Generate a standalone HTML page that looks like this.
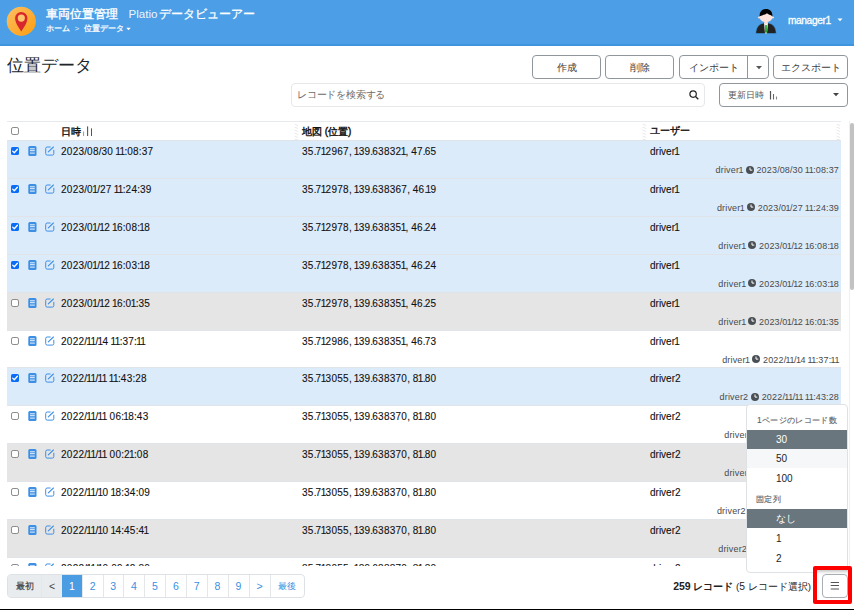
<!DOCTYPE html>
<html lang="ja"><head><meta charset="utf-8">
<style>
*{box-sizing:border-box;margin:0;padding:0}
html,body{width:854px;height:610px;overflow:hidden;background:#fff;font-family:"Liberation Sans",sans-serif;color:#212529}
.abs{position:absolute}
#hdr{position:absolute;left:0;top:0;width:854px;height:46px;background:#4c9fe6;border-bottom:2px solid #3e94dd}
#logo{left:5px;top:5px}
.t1{left:46px;top:7px;color:#fff;font-size:12px;font-weight:normal;white-space:nowrap;line-height:14px}
.t2{font-weight:normal;margin-left:10.5px}
.bc{left:46px;top:24px;color:#fff;font-size:8px;white-space:nowrap;line-height:10px;-webkit-text-stroke:.25px #fff}
#ptitle{left:7px;top:55px;font-size:16.6px;color:#212529;line-height:22px}
.btn{position:absolute;top:55px;height:24px;border:1px solid #8f969c;border-radius:4px;font-size:9.5px;color:#3d3d3d;text-align:center;line-height:23.5px;background:#fff;white-space:nowrap}
#search{left:291px;top:83px;width:414px;height:24px;border:1px solid #e6e8ea;border-radius:4px;font-size:9.6px;letter-spacing:-.2px;color:#6b6b6b;line-height:22px;padding-left:5px}
#sort{left:719px;top:83px;width:129px;height:24px;border:1px solid #8f969c;border-radius:4px;font-size:9.4px;color:#555;line-height:22px;padding-left:8px}
#tbl{left:7px;top:121px;width:834px;height:445px;overflow:hidden;border-top:1px solid #e6eaee}
.hd{position:absolute;top:0;left:0;width:834px;height:19px;font-size:10px;font-weight:normal;-webkit-text-stroke:.4px #111;color:#111;background:#fff}
.row{position:absolute;left:0;width:834px;height:38px;border-top:1px solid #e0e4e8;font-size:10px;color:#111;white-space:nowrap;-webkit-text-stroke:.1px #111}
.sel{background:#dcebfa}
.gr{background:#e5e5e5}
.wh{background:#fff}
.cbx{position:absolute;left:4px;top:6px}
.doc{position:absolute;left:21px;top:5px}
.edit{position:absolute;left:38px;top:5px}
.c1{position:absolute;left:54px;top:5px;line-height:12px}
.c2{position:absolute;left:295px;top:5px;line-height:12px}
.c3{position:absolute;left:643px;top:5px;line-height:12px}
.c4{position:absolute;right:2px;top:23px;font-size:9px;color:#4a4a4a;line-height:12px;-webkit-text-stroke:0}
.num{letter-spacing:.26px}
i{font-style:normal}
.o{letter-spacing:-.6px;margin-left:-.74px}
.p{letter-spacing:-.9px}
.z{letter-spacing:0}
.cm{letter-spacing:0}
.c4{letter-spacing:.18px}
.c4 .o{letter-spacing:-.5px;margin-left:-.65px}
.c4 .p{letter-spacing:-.9px}
.c4 .z{letter-spacing:0}
.cm{letter-spacing:0}
#sbline{left:849px;top:121px;width:1px;height:445px;background:#f0f0f0}
#thumb{left:850px;top:123px;width:4px;height:167px;background:#c2c2c2;border-radius:2px}
#pag{left:7px;top:574px;height:24px;width:298px;border:1px solid #dee2e6;border-radius:4px;overflow:hidden;font-size:10.5px}
.pg{position:absolute;top:0;height:22px;line-height:22px;text-align:center;color:#3a8fe0;border-left:1px solid #e4e7ea}
#foot{right:43px;top:580px;font-size:9.7px;color:#222;white-space:nowrap;line-height:12px}
#menu{left:746px;top:404px;width:102px;height:169px;border:1px solid #dfe2e5;border-radius:4px;background:#fff;font-size:10px}
.mh{position:absolute;left:9px;font-size:8.4px;letter-spacing:.35px;color:#5f656b;-webkit-text-stroke:.15px #5f656b;line-height:10px;white-space:nowrap}
.mi{position:absolute;left:0;width:100px;height:19px;line-height:19px;padding-left:29px;color:#212529}
.mact{background:#6a767d;color:#fff}
.mlt{background:#f6f7f8}
#redbox{left:813px;top:566px;width:39px;height:38px;border:4px solid #f00;border-radius:2px;background:linear-gradient(#c9c9c9 0,#dedede 1.5px,#f4f4f4 3px,#fff 5px)}
#mbtn{left:822px;top:574px;width:26px;height:24px;border:1px solid #a9aeb3;border-radius:4px;background:#fff}
#botline{left:0;top:609px;width:854px;height:1px;background:#000}
</style></head><body>
<div id="hdr"></div>
<svg id="logo" class="abs" width="32" height="32" viewBox="0 0 32 32">
<defs><linearGradient id="og" x1="0" y1="0" x2="1" y2="1"><stop offset="0" stop-color="#fdc064"/><stop offset="1" stop-color="#fd9c0e"/></linearGradient></defs>
<circle cx="16.3" cy="16.3" r="15.3" fill="#3aa4f6"/>
<circle cx="16.3" cy="16.3" r="14.6" fill="url(#og)"/>
<path d="M16.3 26.4 C13.5 22.3 10.1 18 10.1 13.1 A6.15 6.15 0 0 1 22.4 13.1 C22.4 18 19.1 22.3 16.3 26.4Z" fill="#d8262d"/>
<circle cx="16.3" cy="13.1" r="3.6" fill="#fcc46c"/>
</svg>
<div class="abs t1"><span style="-webkit-text-stroke:.35px #fff">車両位置管理</span><span class="t2"><span style="font-size:11.6px;color:rgba(255,255,255,.9)">Platio</span><span style="-webkit-text-stroke:.3px #fff;margin-left:1.8px">データビューアー</span></span></div>
<div class="abs bc">ホーム &nbsp;<span style="-webkit-text-stroke:0;opacity:.85">&gt;</span>&nbsp; 位置データ</div>
<svg class="abs" style="left:126px;top:27px" width="5" height="4" viewBox="0 0 5 4"><path d="M0.3 0.8H4.7L2.5 3.2Z" fill="#fff"/></svg>
<svg class="abs" style="left:752px;top:6px" width="28" height="30" viewBox="0 0 28 30">
<path d="M3.8 27.6 C3.8 20.5 8 16.8 14 16.8 C20 16.8 24.2 20.5 24.2 27.6Z" fill="#222" stroke="#3aa0f0" stroke-width="0.6"/>
<path d="M12 16.8 L16 16.8 L15 27.5 L13 27.5Z" fill="#f4f4f4"/>
<path d="M13.2 19 L14.8 19 L15 26 L14 27.4 L13 26Z" fill="#22a52a"/>
<rect x="12.3" y="14" width="3.4" height="4" fill="#fde0d8"/>
<ellipse cx="14" cy="11.5" rx="6.3" ry="4.6" fill="#fde3db"/>
<ellipse cx="7.2" cy="11.5" rx="1.2" ry="1.1" fill="#fde3db"/>
<ellipse cx="20.8" cy="11.5" rx="1.2" ry="1.1" fill="#fde3db"/>
<path d="M7.6 10.2 C7.4 5.5 10 3 14 3 C18 3 20.6 5.5 20.4 10.2 C18.5 9 16 8.5 15 7.3 C14 8.5 11 9 7.6 10.2Z" fill="#000"/>
</svg>
<div class="abs" style="left:788px;top:14px;color:#fff;font-size:10.2px;font-weight:normal;-webkit-text-stroke:.3px #fff;line-height:13px;letter-spacing:-.4px">manager<i style="letter-spacing:-1.4px">1</i></div>
<svg class="abs" style="left:837px;top:18px" width="6" height="4" viewBox="0 0 6 4"><path d="M0.5 0.5H5.5L3 3.2Z" fill="#fff"/></svg>

<div id="ptitle" class="abs">位置データ</div>
<div class="btn" style="left:532px;width:69px">作成</div>
<div class="btn" style="left:605px;width:69px">削除</div>
<div class="btn" style="left:679px;width:90px;text-align:left;padding-left:9px">インポート</div>
<div class="abs" style="left:747px;top:55px;width:1px;height:24px;background:#8f969c"></div>
<svg class="abs" style="left:756px;top:66px" width="6" height="4" viewBox="0 0 6 4"><path d="M0 0H6L3 3.2Z" fill="#555"/></svg>
<div class="btn" style="left:773px;width:75px">エクスポート</div>
<div id="search" class="abs">レコードを検索する</div>
<svg class="abs" style="left:689px;top:90px" width="10" height="10" viewBox="0 0 10 10"><circle cx="4.1" cy="4.1" r="3.2" stroke="#222" stroke-width="1.2" fill="none"/><path d="M6.5 6.5L9.3 9.3" stroke="#222" stroke-width="1.3"/></svg>
<div id="sort" class="abs">更新日時</div>
<svg class="abs" style="left:769px;top:90px" width="10" height="10" viewBox="0 0 10 10"><path d="M1.5 1V9.5" stroke="#555" stroke-width="1.2"/><path d="M4.5 4V9.5" stroke="#666" stroke-width="1.1"/><path d="M7.5 6.5V9.5" stroke="#888" stroke-width="1.1"/></svg>
<svg class="abs" style="left:833px;top:93px" width="6" height="4" viewBox="0 0 6 4"><path d="M0 0H6L3 3.2Z" fill="#444"/></svg>

<div id="tbl" class="abs">
<div class="hd">
<svg class="cbx" style="top:5px" width="8" height="8" viewBox="0 0 8 8"><rect x="0.5" y="0.5" width="7" height="7" rx="1.6" fill="#fff" stroke="#8a8a8a" stroke-width="1"/></svg>
<span class="c1" style="top:3.5px">日時</span>
<svg class="abs" style="left:76px;top:4px" width="10" height="10" viewBox="0 0 10 10"><path d="M0.6 5.5V10M4.6 0.5V10M8.5 2.5V10" stroke="#999" stroke-width="1"/><path d="M4.6 0.5V10M8.5 2.5V10" stroke="#555" stroke-width="1"/></svg>
<svg class="abs" style="left:287px;top:2px" width="5" height="16" viewBox="0 0 5 16"><path d="M0.5 0L4 1.5M0.5 3L4 4.5M0.5 6L4 7.5M0.5 9L4 10.5M0.5 12L4 13.5M0.5 15L4 16" stroke="#e2e2e2" stroke-width="0.8"/></svg><span class="c2" style="top:3.5px">地図 (位置)</span>
<svg class="abs" style="left:635px;top:2px" width="5" height="16" viewBox="0 0 5 16"><path d="M0.5 0L4 1.5M0.5 3L4 4.5M0.5 6L4 7.5M0.5 9L4 10.5M0.5 12L4 13.5M0.5 15L4 16" stroke="#e2e2e2" stroke-width="0.8"/></svg><span class="c3" style="top:3px">ユーザー</span><svg class="abs" style="left:829px;top:2px" width="5" height="16" viewBox="0 0 5 16"><path d="M0.5 0L4 1.5M0.5 3L4 4.5M0.5 6L4 7.5M0.5 9L4 10.5M0.5 12L4 13.5M0.5 15L4 16" stroke="#e2e2e2" stroke-width="0.8"/></svg>
</div>
<div class="row sel" style="top:18.0px"><svg class="cbx" width="8" height="8" viewBox="0 0 8 8"><rect x="0" y="0" width="8" height="8" rx="1.6" fill="#0b6cf6"/><path d="M1.7 4.1 L3.3 5.7 L6.4 2.2" stroke="#fff" stroke-width="1.3" fill="none" stroke-linecap="round" stroke-linejoin="round"/></svg><svg class="doc" width="9" height="10" viewBox="0 0 9 10"><rect x="0.3" y="0" width="8.2" height="10" rx="1.5" fill="#3d8fe4"/><path d="M2 2.8H6.8M2 4.7H6.8M2 7.1H6.8" stroke="#fff" stroke-width="0.9"/></svg><svg class="edit" width="10" height="10" viewBox="0 0 10 10"><path d="M5.6 1H2.2Q0.7 1 0.7 2.5V7.6Q0.7 9.1 2.2 9.1H7.3Q8.8 9.1 8.8 7.6V3.8" stroke="#3d8fe4" stroke-width="1" fill="none"/><path d="M3.3 5.8L8.4 1" stroke="#3d8fe4" stroke-width="1.1" stroke-linecap="round"/></svg><span class="c1 num">2023<i class="z">/</i>08<i class="z">/</i>30<i class="z"> </i><i class="o">1</i><i class="o">1</i><i class="z">:</i>08<i class="z">:</i>37</span><span class="c2 num">35<i class="p">.</i>7<i class="o">1</i>2967<i class="cm">,</i><i class="z"> </i><i class="o">1</i>39<i class="p">.</i>63832<i class="o">1</i><i class="cm">,</i><i class="z"> </i>47<i class="p">.</i>65</span><span class="c3">driver<i class="o">1</i></span><span class="c4 num">driver<i class="o">1</i> <svg width="8" height="8" viewBox="0 0 8 8" style="vertical-align:-0.5px"><circle cx="4" cy="4" r="4" fill="#4a4f55"/><path d="M4 1.5V4.1H6.3" stroke="#fff" stroke-width="1" fill="none"/></svg> 2023<i class="z">/</i>08<i class="z">/</i>30<i class="z"> </i><i class="o">1</i><i class="o">1</i><i class="z">:</i>08<i class="z">:</i>37</span></div>
<div class="row sel" style="top:55.9px"><svg class="cbx" width="8" height="8" viewBox="0 0 8 8"><rect x="0" y="0" width="8" height="8" rx="1.6" fill="#0b6cf6"/><path d="M1.7 4.1 L3.3 5.7 L6.4 2.2" stroke="#fff" stroke-width="1.3" fill="none" stroke-linecap="round" stroke-linejoin="round"/></svg><svg class="doc" width="9" height="10" viewBox="0 0 9 10"><rect x="0.3" y="0" width="8.2" height="10" rx="1.5" fill="#3d8fe4"/><path d="M2 2.8H6.8M2 4.7H6.8M2 7.1H6.8" stroke="#fff" stroke-width="0.9"/></svg><svg class="edit" width="10" height="10" viewBox="0 0 10 10"><path d="M5.6 1H2.2Q0.7 1 0.7 2.5V7.6Q0.7 9.1 2.2 9.1H7.3Q8.8 9.1 8.8 7.6V3.8" stroke="#3d8fe4" stroke-width="1" fill="none"/><path d="M3.3 5.8L8.4 1" stroke="#3d8fe4" stroke-width="1.1" stroke-linecap="round"/></svg><span class="c1 num">2023<i class="z">/</i>0<i class="o">1</i><i class="z">/</i>27<i class="z"> </i><i class="o">1</i><i class="o">1</i><i class="z">:</i>24<i class="z">:</i>39</span><span class="c2 num">35<i class="p">.</i>7<i class="o">1</i>2978<i class="cm">,</i><i class="z"> </i><i class="o">1</i>39<i class="p">.</i>638367<i class="cm">,</i><i class="z"> </i>46<i class="p">.</i><i class="o">1</i>9</span><span class="c3">driver<i class="o">1</i></span><span class="c4 num">driver<i class="o">1</i> <svg width="8" height="8" viewBox="0 0 8 8" style="vertical-align:-0.5px"><circle cx="4" cy="4" r="4" fill="#4a4f55"/><path d="M4 1.5V4.1H6.3" stroke="#fff" stroke-width="1" fill="none"/></svg> 2023<i class="z">/</i>0<i class="o">1</i><i class="z">/</i>27<i class="z"> </i><i class="o">1</i><i class="o">1</i><i class="z">:</i>24<i class="z">:</i>39</span></div>
<div class="row sel" style="top:93.8px"><svg class="cbx" width="8" height="8" viewBox="0 0 8 8"><rect x="0" y="0" width="8" height="8" rx="1.6" fill="#0b6cf6"/><path d="M1.7 4.1 L3.3 5.7 L6.4 2.2" stroke="#fff" stroke-width="1.3" fill="none" stroke-linecap="round" stroke-linejoin="round"/></svg><svg class="doc" width="9" height="10" viewBox="0 0 9 10"><rect x="0.3" y="0" width="8.2" height="10" rx="1.5" fill="#3d8fe4"/><path d="M2 2.8H6.8M2 4.7H6.8M2 7.1H6.8" stroke="#fff" stroke-width="0.9"/></svg><svg class="edit" width="10" height="10" viewBox="0 0 10 10"><path d="M5.6 1H2.2Q0.7 1 0.7 2.5V7.6Q0.7 9.1 2.2 9.1H7.3Q8.8 9.1 8.8 7.6V3.8" stroke="#3d8fe4" stroke-width="1" fill="none"/><path d="M3.3 5.8L8.4 1" stroke="#3d8fe4" stroke-width="1.1" stroke-linecap="round"/></svg><span class="c1 num">2023<i class="z">/</i>0<i class="o">1</i><i class="z">/</i><i class="o">1</i>2<i class="z"> </i><i class="o">1</i>6<i class="z">:</i>08<i class="z">:</i><i class="o">1</i>8</span><span class="c2 num">35<i class="p">.</i>7<i class="o">1</i>2978<i class="cm">,</i><i class="z"> </i><i class="o">1</i>39<i class="p">.</i>63835<i class="o">1</i><i class="cm">,</i><i class="z"> </i>46<i class="p">.</i>24</span><span class="c3">driver<i class="o">1</i></span><span class="c4 num">driver<i class="o">1</i> <svg width="8" height="8" viewBox="0 0 8 8" style="vertical-align:-0.5px"><circle cx="4" cy="4" r="4" fill="#4a4f55"/><path d="M4 1.5V4.1H6.3" stroke="#fff" stroke-width="1" fill="none"/></svg> 2023<i class="z">/</i>0<i class="o">1</i><i class="z">/</i><i class="o">1</i>2<i class="z"> </i><i class="o">1</i>6<i class="z">:</i>08<i class="z">:</i><i class="o">1</i>8</span></div>
<div class="row sel" style="top:131.7px"><svg class="cbx" width="8" height="8" viewBox="0 0 8 8"><rect x="0" y="0" width="8" height="8" rx="1.6" fill="#0b6cf6"/><path d="M1.7 4.1 L3.3 5.7 L6.4 2.2" stroke="#fff" stroke-width="1.3" fill="none" stroke-linecap="round" stroke-linejoin="round"/></svg><svg class="doc" width="9" height="10" viewBox="0 0 9 10"><rect x="0.3" y="0" width="8.2" height="10" rx="1.5" fill="#3d8fe4"/><path d="M2 2.8H6.8M2 4.7H6.8M2 7.1H6.8" stroke="#fff" stroke-width="0.9"/></svg><svg class="edit" width="10" height="10" viewBox="0 0 10 10"><path d="M5.6 1H2.2Q0.7 1 0.7 2.5V7.6Q0.7 9.1 2.2 9.1H7.3Q8.8 9.1 8.8 7.6V3.8" stroke="#3d8fe4" stroke-width="1" fill="none"/><path d="M3.3 5.8L8.4 1" stroke="#3d8fe4" stroke-width="1.1" stroke-linecap="round"/></svg><span class="c1 num">2023<i class="z">/</i>0<i class="o">1</i><i class="z">/</i><i class="o">1</i>2<i class="z"> </i><i class="o">1</i>6<i class="z">:</i>03<i class="z">:</i><i class="o">1</i>8</span><span class="c2 num">35<i class="p">.</i>7<i class="o">1</i>2978<i class="cm">,</i><i class="z"> </i><i class="o">1</i>39<i class="p">.</i>63835<i class="o">1</i><i class="cm">,</i><i class="z"> </i>46<i class="p">.</i>24</span><span class="c3">driver<i class="o">1</i></span><span class="c4 num">driver<i class="o">1</i> <svg width="8" height="8" viewBox="0 0 8 8" style="vertical-align:-0.5px"><circle cx="4" cy="4" r="4" fill="#4a4f55"/><path d="M4 1.5V4.1H6.3" stroke="#fff" stroke-width="1" fill="none"/></svg> 2023<i class="z">/</i>0<i class="o">1</i><i class="z">/</i><i class="o">1</i>2<i class="z"> </i><i class="o">1</i>6<i class="z">:</i>03<i class="z">:</i><i class="o">1</i>8</span></div>
<div class="row gr" style="top:169.6px"><svg class="cbx" width="8" height="8" viewBox="0 0 8 8"><rect x="0.5" y="0.5" width="7" height="7" rx="1.6" fill="#fff" stroke="#8a8a8a" stroke-width="1"/></svg><svg class="doc" width="9" height="10" viewBox="0 0 9 10"><rect x="0.3" y="0" width="8.2" height="10" rx="1.5" fill="#3d8fe4"/><path d="M2 2.8H6.8M2 4.7H6.8M2 7.1H6.8" stroke="#fff" stroke-width="0.9"/></svg><svg class="edit" width="10" height="10" viewBox="0 0 10 10"><path d="M5.6 1H2.2Q0.7 1 0.7 2.5V7.6Q0.7 9.1 2.2 9.1H7.3Q8.8 9.1 8.8 7.6V3.8" stroke="#3d8fe4" stroke-width="1" fill="none"/><path d="M3.3 5.8L8.4 1" stroke="#3d8fe4" stroke-width="1.1" stroke-linecap="round"/></svg><span class="c1 num">2023<i class="z">/</i>0<i class="o">1</i><i class="z">/</i><i class="o">1</i>2<i class="z"> </i><i class="o">1</i>6<i class="z">:</i>0<i class="o">1</i><i class="z">:</i>35</span><span class="c2 num">35<i class="p">.</i>7<i class="o">1</i>2978<i class="cm">,</i><i class="z"> </i><i class="o">1</i>39<i class="p">.</i>63835<i class="o">1</i><i class="cm">,</i><i class="z"> </i>46<i class="p">.</i>25</span><span class="c3">driver<i class="o">1</i></span><span class="c4 num">driver<i class="o">1</i> <svg width="8" height="8" viewBox="0 0 8 8" style="vertical-align:-0.5px"><circle cx="4" cy="4" r="4" fill="#4a4f55"/><path d="M4 1.5V4.1H6.3" stroke="#fff" stroke-width="1" fill="none"/></svg> 2023<i class="z">/</i>0<i class="o">1</i><i class="z">/</i><i class="o">1</i>2<i class="z"> </i><i class="o">1</i>6<i class="z">:</i>0<i class="o">1</i><i class="z">:</i>35</span></div>
<div class="row wh" style="top:207.5px"><svg class="cbx" width="8" height="8" viewBox="0 0 8 8"><rect x="0.5" y="0.5" width="7" height="7" rx="1.6" fill="#fff" stroke="#8a8a8a" stroke-width="1"/></svg><svg class="doc" width="9" height="10" viewBox="0 0 9 10"><rect x="0.3" y="0" width="8.2" height="10" rx="1.5" fill="#3d8fe4"/><path d="M2 2.8H6.8M2 4.7H6.8M2 7.1H6.8" stroke="#fff" stroke-width="0.9"/></svg><svg class="edit" width="10" height="10" viewBox="0 0 10 10"><path d="M5.6 1H2.2Q0.7 1 0.7 2.5V7.6Q0.7 9.1 2.2 9.1H7.3Q8.8 9.1 8.8 7.6V3.8" stroke="#3d8fe4" stroke-width="1" fill="none"/><path d="M3.3 5.8L8.4 1" stroke="#3d8fe4" stroke-width="1.1" stroke-linecap="round"/></svg><span class="c1 num">2022<i class="z">/</i><i class="o">1</i><i class="o">1</i><i class="z">/</i><i class="o">1</i>4<i class="z"> </i><i class="o">1</i><i class="o">1</i><i class="z">:</i>37<i class="z">:</i><i class="o">1</i><i class="o">1</i></span><span class="c2 num">35<i class="p">.</i>7<i class="o">1</i>2986<i class="cm">,</i><i class="z"> </i><i class="o">1</i>39<i class="p">.</i>63835<i class="o">1</i><i class="cm">,</i><i class="z"> </i>46<i class="p">.</i>73</span><span class="c3">driver<i class="o">1</i></span><span class="c4 num">driver<i class="o">1</i> <svg width="8" height="8" viewBox="0 0 8 8" style="vertical-align:-0.5px"><circle cx="4" cy="4" r="4" fill="#4a4f55"/><path d="M4 1.5V4.1H6.3" stroke="#fff" stroke-width="1" fill="none"/></svg> 2022<i class="z">/</i><i class="o">1</i><i class="o">1</i><i class="z">/</i><i class="o">1</i>4<i class="z"> </i><i class="o">1</i><i class="o">1</i><i class="z">:</i>37<i class="z">:</i><i class="o">1</i><i class="o">1</i></span></div>
<div class="row sel" style="top:245.4px"><svg class="cbx" width="8" height="8" viewBox="0 0 8 8"><rect x="0" y="0" width="8" height="8" rx="1.6" fill="#0b6cf6"/><path d="M1.7 4.1 L3.3 5.7 L6.4 2.2" stroke="#fff" stroke-width="1.3" fill="none" stroke-linecap="round" stroke-linejoin="round"/></svg><svg class="doc" width="9" height="10" viewBox="0 0 9 10"><rect x="0.3" y="0" width="8.2" height="10" rx="1.5" fill="#3d8fe4"/><path d="M2 2.8H6.8M2 4.7H6.8M2 7.1H6.8" stroke="#fff" stroke-width="0.9"/></svg><svg class="edit" width="10" height="10" viewBox="0 0 10 10"><path d="M5.6 1H2.2Q0.7 1 0.7 2.5V7.6Q0.7 9.1 2.2 9.1H7.3Q8.8 9.1 8.8 7.6V3.8" stroke="#3d8fe4" stroke-width="1" fill="none"/><path d="M3.3 5.8L8.4 1" stroke="#3d8fe4" stroke-width="1.1" stroke-linecap="round"/></svg><span class="c1 num">2022<i class="z">/</i><i class="o">1</i><i class="o">1</i><i class="z">/</i><i class="o">1</i><i class="o">1</i><i class="z"> </i><i class="o">1</i><i class="o">1</i><i class="z">:</i>43<i class="z">:</i>28</span><span class="c2 num">35<i class="p">.</i>7<i class="o">1</i>3055<i class="cm">,</i><i class="z"> </i><i class="o">1</i>39<i class="p">.</i>638370<i class="cm">,</i><i class="z"> </i>8<i class="o">1</i><i class="p">.</i>80</span><span class="c3">driver2</span><span class="c4 num">driver2 <svg width="8" height="8" viewBox="0 0 8 8" style="vertical-align:-0.5px"><circle cx="4" cy="4" r="4" fill="#4a4f55"/><path d="M4 1.5V4.1H6.3" stroke="#fff" stroke-width="1" fill="none"/></svg> 2022<i class="z">/</i><i class="o">1</i><i class="o">1</i><i class="z">/</i><i class="o">1</i><i class="o">1</i><i class="z"> </i><i class="o">1</i><i class="o">1</i><i class="z">:</i>43<i class="z">:</i>28</span></div>
<div class="row wh" style="top:283.3px"><svg class="cbx" width="8" height="8" viewBox="0 0 8 8"><rect x="0.5" y="0.5" width="7" height="7" rx="1.6" fill="#fff" stroke="#8a8a8a" stroke-width="1"/></svg><svg class="doc" width="9" height="10" viewBox="0 0 9 10"><rect x="0.3" y="0" width="8.2" height="10" rx="1.5" fill="#3d8fe4"/><path d="M2 2.8H6.8M2 4.7H6.8M2 7.1H6.8" stroke="#fff" stroke-width="0.9"/></svg><svg class="edit" width="10" height="10" viewBox="0 0 10 10"><path d="M5.6 1H2.2Q0.7 1 0.7 2.5V7.6Q0.7 9.1 2.2 9.1H7.3Q8.8 9.1 8.8 7.6V3.8" stroke="#3d8fe4" stroke-width="1" fill="none"/><path d="M3.3 5.8L8.4 1" stroke="#3d8fe4" stroke-width="1.1" stroke-linecap="round"/></svg><span class="c1 num">2022<i class="z">/</i><i class="o">1</i><i class="o">1</i><i class="z">/</i><i class="o">1</i><i class="o">1</i><i class="z"> </i>06<i class="z">:</i><i class="o">1</i>8<i class="z">:</i>43</span><span class="c2 num">35<i class="p">.</i>7<i class="o">1</i>3055<i class="cm">,</i><i class="z"> </i><i class="o">1</i>39<i class="p">.</i>638370<i class="cm">,</i><i class="z"> </i>8<i class="o">1</i><i class="p">.</i>80</span><span class="c3">driver2</span><span class="c4 num" style="right:-4px">driver2 <svg width="8" height="8" viewBox="0 0 8 8" style="vertical-align:-0.5px"><circle cx="4" cy="4" r="4" fill="#4a4f55"/><path d="M4 1.5V4.1H6.3" stroke="#fff" stroke-width="1" fill="none"/></svg> 2022<i class="z">/</i><i class="o">1</i><i class="o">1</i><i class="z">/</i><i class="o">1</i><i class="o">1</i><i class="z"> </i>06<i class="z">:</i><i class="o">1</i>8<i class="z">:</i>43</span></div>
<div class="row gr" style="top:321.2px"><svg class="cbx" width="8" height="8" viewBox="0 0 8 8"><rect x="0.5" y="0.5" width="7" height="7" rx="1.6" fill="#fff" stroke="#8a8a8a" stroke-width="1"/></svg><svg class="doc" width="9" height="10" viewBox="0 0 9 10"><rect x="0.3" y="0" width="8.2" height="10" rx="1.5" fill="#3d8fe4"/><path d="M2 2.8H6.8M2 4.7H6.8M2 7.1H6.8" stroke="#fff" stroke-width="0.9"/></svg><svg class="edit" width="10" height="10" viewBox="0 0 10 10"><path d="M5.6 1H2.2Q0.7 1 0.7 2.5V7.6Q0.7 9.1 2.2 9.1H7.3Q8.8 9.1 8.8 7.6V3.8" stroke="#3d8fe4" stroke-width="1" fill="none"/><path d="M3.3 5.8L8.4 1" stroke="#3d8fe4" stroke-width="1.1" stroke-linecap="round"/></svg><span class="c1 num">2022<i class="z">/</i><i class="o">1</i><i class="o">1</i><i class="z">/</i><i class="o">1</i><i class="o">1</i><i class="z"> </i>00<i class="z">:</i>2<i class="o">1</i><i class="z">:</i>08</span><span class="c2 num">35<i class="p">.</i>7<i class="o">1</i>3055<i class="cm">,</i><i class="z"> </i><i class="o">1</i>39<i class="p">.</i>638370<i class="cm">,</i><i class="z"> </i>8<i class="o">1</i><i class="p">.</i>80</span><span class="c3">driver2</span><span class="c4 num" style="right:-4px">driver2 <svg width="8" height="8" viewBox="0 0 8 8" style="vertical-align:-0.5px"><circle cx="4" cy="4" r="4" fill="#4a4f55"/><path d="M4 1.5V4.1H6.3" stroke="#fff" stroke-width="1" fill="none"/></svg> 2022<i class="z">/</i><i class="o">1</i><i class="o">1</i><i class="z">/</i><i class="o">1</i><i class="o">1</i><i class="z"> </i>00<i class="z">:</i>2<i class="o">1</i><i class="z">:</i>08</span></div>
<div class="row wh" style="top:359.1px"><svg class="cbx" width="8" height="8" viewBox="0 0 8 8"><rect x="0.5" y="0.5" width="7" height="7" rx="1.6" fill="#fff" stroke="#8a8a8a" stroke-width="1"/></svg><svg class="doc" width="9" height="10" viewBox="0 0 9 10"><rect x="0.3" y="0" width="8.2" height="10" rx="1.5" fill="#3d8fe4"/><path d="M2 2.8H6.8M2 4.7H6.8M2 7.1H6.8" stroke="#fff" stroke-width="0.9"/></svg><svg class="edit" width="10" height="10" viewBox="0 0 10 10"><path d="M5.6 1H2.2Q0.7 1 0.7 2.5V7.6Q0.7 9.1 2.2 9.1H7.3Q8.8 9.1 8.8 7.6V3.8" stroke="#3d8fe4" stroke-width="1" fill="none"/><path d="M3.3 5.8L8.4 1" stroke="#3d8fe4" stroke-width="1.1" stroke-linecap="round"/></svg><span class="c1 num">2022<i class="z">/</i><i class="o">1</i><i class="o">1</i><i class="z">/</i><i class="o">1</i>0<i class="z"> </i><i class="o">1</i>8<i class="z">:</i>34<i class="z">:</i>09</span><span class="c2 num">35<i class="p">.</i>7<i class="o">1</i>3055<i class="cm">,</i><i class="z"> </i><i class="o">1</i>39<i class="p">.</i>638370<i class="cm">,</i><i class="z"> </i>8<i class="o">1</i><i class="p">.</i>80</span><span class="c3">driver2</span><span class="c4 num">driver2 <svg width="8" height="8" viewBox="0 0 8 8" style="vertical-align:-0.5px"><circle cx="4" cy="4" r="4" fill="#4a4f55"/><path d="M4 1.5V4.1H6.3" stroke="#fff" stroke-width="1" fill="none"/></svg> 2022<i class="z">/</i><i class="o">1</i><i class="o">1</i><i class="z">/</i><i class="o">1</i>0<i class="z"> </i><i class="o">1</i>8<i class="z">:</i>34<i class="z">:</i>09</span></div>
<div class="row gr" style="top:397.0px"><svg class="cbx" width="8" height="8" viewBox="0 0 8 8"><rect x="0.5" y="0.5" width="7" height="7" rx="1.6" fill="#fff" stroke="#8a8a8a" stroke-width="1"/></svg><svg class="doc" width="9" height="10" viewBox="0 0 9 10"><rect x="0.3" y="0" width="8.2" height="10" rx="1.5" fill="#3d8fe4"/><path d="M2 2.8H6.8M2 4.7H6.8M2 7.1H6.8" stroke="#fff" stroke-width="0.9"/></svg><svg class="edit" width="10" height="10" viewBox="0 0 10 10"><path d="M5.6 1H2.2Q0.7 1 0.7 2.5V7.6Q0.7 9.1 2.2 9.1H7.3Q8.8 9.1 8.8 7.6V3.8" stroke="#3d8fe4" stroke-width="1" fill="none"/><path d="M3.3 5.8L8.4 1" stroke="#3d8fe4" stroke-width="1.1" stroke-linecap="round"/></svg><span class="c1 num">2022<i class="z">/</i><i class="o">1</i><i class="o">1</i><i class="z">/</i><i class="o">1</i>0<i class="z"> </i><i class="o">1</i>4<i class="z">:</i>45<i class="z">:</i>4<i class="o">1</i></span><span class="c2 num">35<i class="p">.</i>7<i class="o">1</i>3055<i class="cm">,</i><i class="z"> </i><i class="o">1</i>39<i class="p">.</i>638370<i class="cm">,</i><i class="z"> </i>8<i class="o">1</i><i class="p">.</i>80</span><span class="c3">driver2</span><span class="c4 num">driver2 <svg width="8" height="8" viewBox="0 0 8 8" style="vertical-align:-0.5px"><circle cx="4" cy="4" r="4" fill="#4a4f55"/><path d="M4 1.5V4.1H6.3" stroke="#fff" stroke-width="1" fill="none"/></svg> 2022<i class="z">/</i><i class="o">1</i><i class="o">1</i><i class="z">/</i><i class="o">1</i>0<i class="z"> </i><i class="o">1</i>4<i class="z">:</i>45<i class="z">:</i>4<i class="o">1</i></span></div>
<div class="row wh" style="top:434.9px"><svg class="cbx" width="8" height="8" viewBox="0 0 8 8"><rect x="0.5" y="0.5" width="7" height="7" rx="1.6" fill="#fff" stroke="#8a8a8a" stroke-width="1"/></svg><svg class="doc" width="9" height="10" viewBox="0 0 9 10"><rect x="0.3" y="0" width="8.2" height="10" rx="1.5" fill="#3d8fe4"/><path d="M2 2.8H6.8M2 4.7H6.8M2 7.1H6.8" stroke="#fff" stroke-width="0.9"/></svg><svg class="edit" width="10" height="10" viewBox="0 0 10 10"><path d="M5.6 1H2.2Q0.7 1 0.7 2.5V7.6Q0.7 9.1 2.2 9.1H7.3Q8.8 9.1 8.8 7.6V3.8" stroke="#3d8fe4" stroke-width="1" fill="none"/><path d="M3.3 5.8L8.4 1" stroke="#3d8fe4" stroke-width="1.1" stroke-linecap="round"/></svg><span class="c1 num">2022<i class="z">/</i><i class="o">1</i><i class="o">1</i><i class="z">/</i><i class="o">1</i>0<i class="z"> </i>09<i class="z">:</i><i class="o">1</i>2<i class="z">:</i>30</span><span class="c2 num">35<i class="p">.</i>7<i class="o">1</i>3055<i class="cm">,</i><i class="z"> </i><i class="o">1</i>39<i class="p">.</i>638370<i class="cm">,</i><i class="z"> </i>8<i class="o">1</i><i class="p">.</i>80</span><span class="c3">driver2</span><span class="c4 num">driver2 <svg width="8" height="8" viewBox="0 0 8 8" style="vertical-align:-0.5px"><circle cx="4" cy="4" r="4" fill="#4a4f55"/><path d="M4 1.5V4.1H6.3" stroke="#fff" stroke-width="1" fill="none"/></svg> 2022<i class="z">/</i><i class="o">1</i><i class="o">1</i><i class="z">/</i><i class="o">1</i>0<i class="z"> </i>09<i class="z">:</i><i class="o">1</i>2<i class="z">:</i>30</span></div>
</div>
<div id="sbline" class="abs"></div>
<div id="thumb" class="abs"></div>

<div id="pag" class="abs">
<div class="pg" style="left:0px;width:33px;background:#e9ecef;color:#444;border-left:none;font-size:9.3px;-webkit-text-stroke:.2px #444">最初</div>
<div class="pg" style="left:33px;width:21px;background:#e9ecef;color:#444">&lt;</div>
<div class="pg" style="left:54px;width:20px;background:#4b9de3;color:#fff;border-left:none">1</div>
<div class="pg" style="left:74px;width:20.5px">2</div>
<div class="pg" style="left:94.5px;width:20.5px">3</div>
<div class="pg" style="left:115px;width:21px">4</div>
<div class="pg" style="left:136px;width:21px">5</div>
<div class="pg" style="left:157px;width:21px">6</div>
<div class="pg" style="left:178px;width:20.5px">7</div>
<div class="pg" style="left:198.5px;width:21.0px">8</div>
<div class="pg" style="left:219.5px;width:21.0px">9</div>
<div class="pg" style="left:240.5px;width:21.0px">&gt;</div>
<div class="pg" style="left:261.5px;width:34.5px;font-size:9.3px">最後</div>
</div>
<div id="foot" class="abs"><b><span style="font-size:10.5px">259</span> レコード</b> (<span style="font-size:10.3px">5</span> レコード選択)</div>

<div id="menu" class="abs">
<div class="mh" style="top:10px;left:10px">1ページのレコード数</div>
<div class="mi mact" style="top:25px">30</div>
<div class="mi mlt" style="top:44px">50</div>
<div class="mi" style="top:64px">100</div>
<div class="mh" style="top:89px">固定列</div>
<div class="mi mact" style="top:104px">なし</div>
<div class="mi" style="top:124px">1</div>
<div class="mi" style="top:144px">2</div>
</div>
<div id="redbox" class="abs"></div>
<div id="mbtn" class="abs"></div>
<svg class="abs" style="left:830px;top:581px" width="10" height="10" viewBox="0 0 10 10"><path d="M0.7 1.5H9M0.7 4.5H9M0.7 8H9" stroke="#555" stroke-width="1"/></svg>
<div id="botline" class="abs"></div>
</body></html>
